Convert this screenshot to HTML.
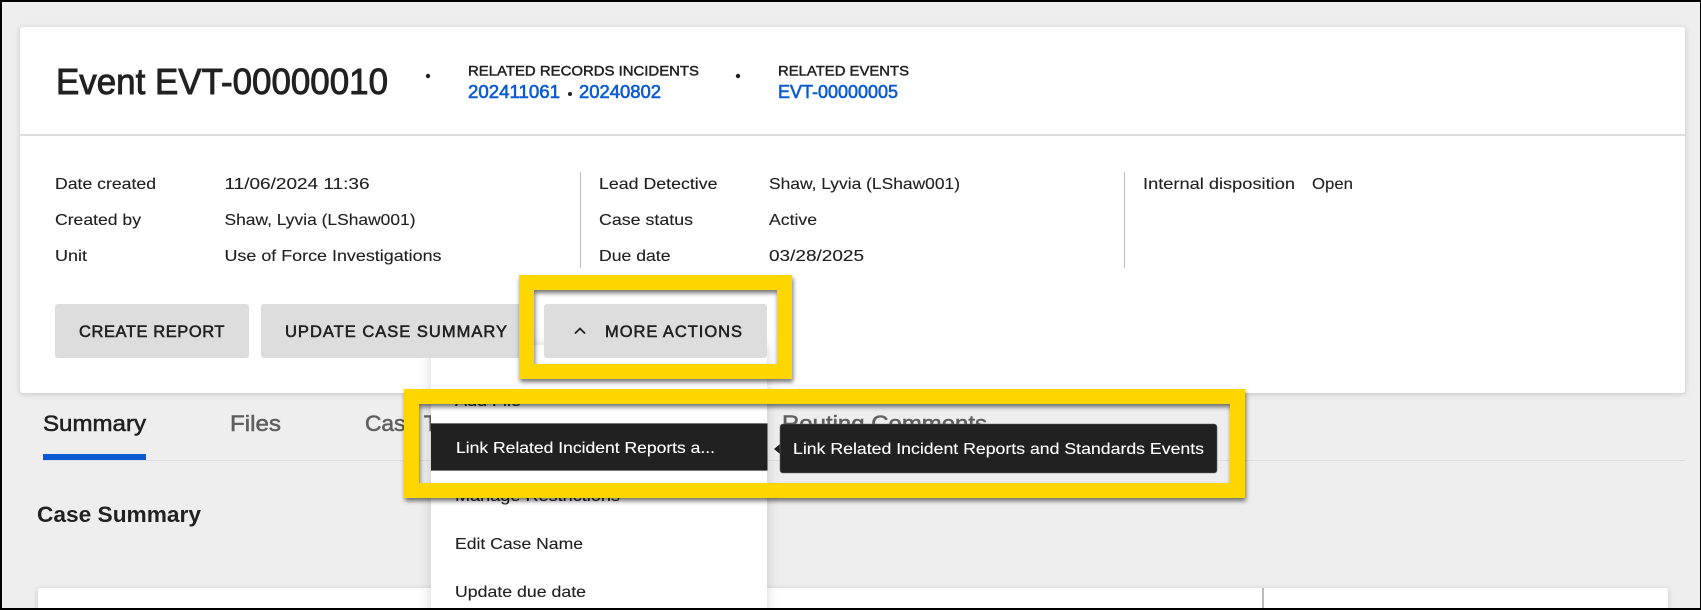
<!DOCTYPE html>
<html lang="en">
<head>
<meta charset="utf-8">
<title>Event EVT-00000010</title>
<style>
html,body{margin:0;padding:0;width:1701px;height:610px;overflow:hidden;background:#000}
svg{display:block}
text{font-family:"Liberation Sans",Arial,sans-serif;font-size:16px;fill:#212121;stroke:#212121;stroke-width:.12px;white-space:pre}
.lbl{font-size:14px;stroke-width:.45px}
.lnk{font-size:18px;fill:#0a5bd3;stroke:#0a5bd3;stroke-width:.6px}
.btn{font-size:16.5px;stroke-width:.55px}
.tab{font-size:22px;fill:#5f5f5f;stroke:#5f5f5f;stroke-width:.55px}
text.w{fill:#fff;stroke:#fff;stroke-width:.12px}
rect.w{fill:#fff}
</style>
</head>
<body>
<svg width="1701" height="610" viewBox="0 0 1701 610" xmlns="http://www.w3.org/2000/svg">
<defs>
<filter id="s1" x="-5%" y="-10%" width="110%" height="120%"><feDropShadow dx="0" dy="1" stdDeviation="3" flood-color="#000" flood-opacity=".18"/></filter>
<filter id="s2" x="-20%" y="-10%" width="140%" height="120%"><feDropShadow dx="0" dy="0" stdDeviation="6" flood-color="#000" flood-opacity=".16"/></filter>
<filter id="s3" x="-5%" y="-10%" width="110%" height="125%"><feDropShadow dx="1" dy="3" stdDeviation="2.5" flood-color="#000" flood-opacity=".55"/></filter>
</defs>

<rect x="0" y="0" width="1701" height="610" fill="#000"/>
<rect x="2" y="2" width="1698" height="606" fill="#eeeeee"/>

<!-- tabs -->
<text class="tab" x="43" y="431" textLength="103" lengthAdjust="spacingAndGlyphs" style="fill:#212121;stroke:#212121">Summary</text>
<text class="tab" x="230" y="431" textLength="51" lengthAdjust="spacingAndGlyphs">Files</text>
<text class="tab" x="365" y="431" textLength="117" lengthAdjust="spacingAndGlyphs">Case Tasks</text>
<text class="tab" x="782" y="431" textLength="205" lengthAdjust="spacingAndGlyphs">Routing Comments</text>
<rect x="43" y="460" width="1642" height="1" fill="#dddddd"/>
<rect x="43" y="454" width="103" height="6" fill="#0a5bd3"/>

<text x="37" y="522" textLength="164" lengthAdjust="spacingAndGlyphs" style="font-size:22px;font-weight:700;stroke-width:0">Case Summary</text>

<!-- lower card -->
<rect x="38" y="588" width="1630" height="40" rx="3" class="w" filter="url(#s1)"/>
<rect x="1262" y="588" width="2" height="20" fill="#bbbbbb"/>

<!-- header card -->
<rect x="20" y="27" width="1665" height="366" rx="3" class="w" filter="url(#s1)"/>
<rect x="20" y="134" width="1665" height="2" fill="#dddddd"/>

<text x="56" y="94" textLength="332" lengthAdjust="spacingAndGlyphs" style="font-size:36px;stroke-width:.9px">Event EVT-00000010</text>
<circle cx="428" cy="76" r="2.2" fill="#212121"/>
<text class="lbl" x="468" y="75.5" textLength="231" lengthAdjust="spacingAndGlyphs">RELATED RECORDS INCIDENTS</text>
<text class="lnk" x="468" y="98" textLength="92" lengthAdjust="spacingAndGlyphs">202411061</text>
<circle cx="570" cy="94" r="2" fill="#212121"/>
<text class="lnk" x="579" y="98" textLength="82" lengthAdjust="spacingAndGlyphs">20240802</text>
<circle cx="738" cy="76" r="2.2" fill="#212121"/>
<text class="lbl" x="778" y="75.5" textLength="131" lengthAdjust="spacingAndGlyphs">RELATED EVENTS</text>
<text class="lnk" x="778" y="98" textLength="120" lengthAdjust="spacingAndGlyphs">EVT-00000005</text>

<text x="55" y="189" textLength="101" lengthAdjust="spacingAndGlyphs">Date created</text>
<text x="55" y="225" textLength="86" lengthAdjust="spacingAndGlyphs">Created by</text>
<text x="55" y="261" textLength="32" lengthAdjust="spacingAndGlyphs">Unit</text>
<text x="224.5" y="189" textLength="145" lengthAdjust="spacingAndGlyphs">11/06/2024 11:36</text>
<text x="224.5" y="225" textLength="191" lengthAdjust="spacingAndGlyphs">Shaw, Lyvia (LShaw001)</text>
<text x="224.5" y="261" textLength="217" lengthAdjust="spacingAndGlyphs">Use of Force Investigations</text>

<rect x="580" y="172" width="1" height="96" fill="#bbbbbb"/>
<text x="599" y="189" textLength="118.5" lengthAdjust="spacingAndGlyphs">Lead Detective</text>
<text x="599" y="225" textLength="94" lengthAdjust="spacingAndGlyphs">Case status</text>
<text x="599" y="261" textLength="71.5" lengthAdjust="spacingAndGlyphs">Due date</text>
<text x="769" y="189" textLength="191" lengthAdjust="spacingAndGlyphs">Shaw, Lyvia (LShaw001)</text>
<text x="769" y="225" textLength="48" lengthAdjust="spacingAndGlyphs">Active</text>
<text x="769" y="261" textLength="95" lengthAdjust="spacingAndGlyphs">03/28/2025</text>

<rect x="1124" y="172" width="1" height="96" fill="#bbbbbb"/>
<text x="1143" y="189" textLength="152" lengthAdjust="spacingAndGlyphs">Internal disposition</text>
<text x="1312" y="189" textLength="41" lengthAdjust="spacingAndGlyphs">Open</text>

<!-- menu (drawn beneath the buttons) -->
<rect x="431" y="345" width="336" height="283" fill="#fff" filter="url(#s2)"/>
<text x="455" y="406" textLength="66" lengthAdjust="spacingAndGlyphs">Add File</text>
<text x="455" y="501" textLength="165" lengthAdjust="spacingAndGlyphs">Manage Restrictions</text>
<text x="455" y="549" textLength="128" lengthAdjust="spacingAndGlyphs">Edit Case Name</text>
<text x="455" y="597" textLength="131" lengthAdjust="spacingAndGlyphs">Update due date</text>
<rect x="431" y="423" width="336.5" height="48" fill="#777777"/>
<rect x="431" y="424" width="336.5" height="46" fill="#212121"/>
<text class="w" x="456" y="453" textLength="259" lengthAdjust="spacingAndGlyphs">Link Related Incident Reports a...</text>

<!-- buttons -->
<rect x="55" y="304" width="194" height="54" rx="3" fill="#dddddd"/>
<text class="btn" x="79" y="337" textLength="145.5" lengthAdjust="spacing">CREATE REPORT</text>
<rect x="261" y="304" width="270" height="54" rx="3" fill="#dddddd"/>
<text class="btn" x="285" y="337" textLength="222" lengthAdjust="spacing">UPDATE CASE SUMMARY</text>
<rect x="544" y="304" width="223" height="54" rx="3" fill="#dddddd"/>
<path d="M575 333.5L580 328.5L585 333.5" fill="none" stroke="#212121" stroke-width="1.8"/>
<text class="btn" x="605" y="337" textLength="137" lengthAdjust="spacing">MORE ACTIONS</text>

<!-- tooltip -->
<path d="M774 449L780 444V454Z" fill="#212121"/>
<rect x="780" y="424" width="437" height="49" rx="3" fill="#212121" stroke="#666" stroke-width=".6"/>
<text class="w" x="793" y="454" textLength="411" lengthAdjust="spacingAndGlyphs">Link Related Incident Reports and Standards Events</text>

<!-- highlight frames -->
<path filter="url(#s3)" fill="#ffd600" fill-rule="evenodd" d="M519 275H792V379H519ZM534 290V364H777V290Z"/>
<path filter="url(#s3)" fill="#ffd600" fill-rule="evenodd" d="M404 389H1245V498H404ZM419 404V483H1230V404Z"/>
<rect x="0" y="608" width="1701" height="2" fill="#000"/>
</svg>
</body>
</html>
